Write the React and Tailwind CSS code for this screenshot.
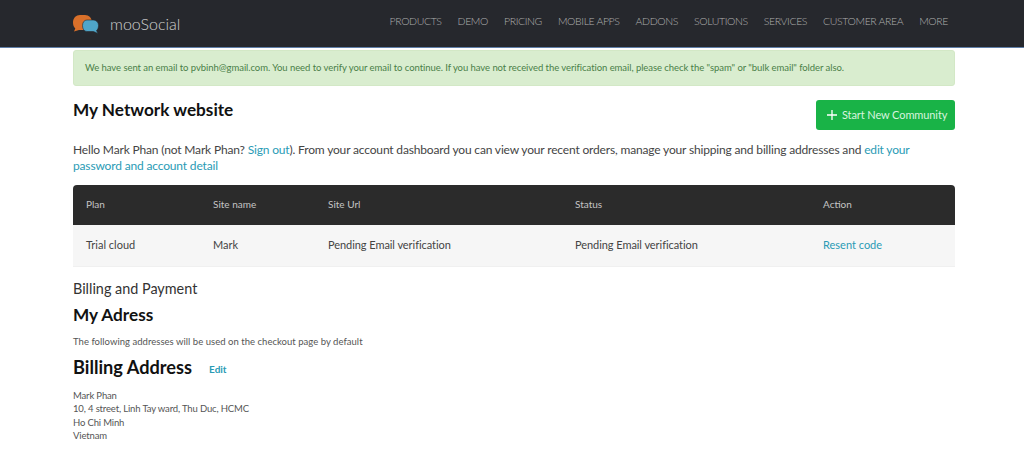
const navLinks = ['PRODUCTS', 'DEMO', 'PRICING', 'MOBILE APPS', 'ADDONS', 'SOLUTIONS', 'SERVICES', 'CUSTOMER AREA', 'MORE']

function Logo() {
  return (
    <svg width="26" height="19" viewBox="0 0 26 19" className="block mt-[1px]">
      <path d="M7 0h5c4 0 7 3 7 7.500S16 15 12 15H6L1 16.500 2.300 13.500C.8 12 0 10 0 7.500 0 3 3 0 7 0z" fill="#d9702a" />
      <path d="M14 5h6c3.300 0 5.500 2.300 5.500 5.500 0 2.300-.7 3.900-2 5l1.500 3-4.500-2h-6.500c-2.800 0-4.500-2.500-4.500-5.800S11.200 5 14 5z" fill="#4fa6c9" stroke="#26282d" strokeWidth="0.6" />
    </svg>
  )
}

function Header() {
  return (
    <nav className="h-[48px] bg-[#26282d] border-b border-[#5f7fa8]">
      <div className="flex items-center justify-between h-[47px] pl-[73px] pr-[76px]">
        <div className="flex items-center gap-[11px]">
          <Logo />
          <span className="text-[16px] font-light text-[#d0d0d0]">mooSocial</span>
        </div>
        <div className="flex items-center gap-[16px] pb-[3px]">
          {navLinks.map((link) => (
            <a key={link} className="text-[10.500px] font-light tracking-[-0.38px] text-[#b0b0b0]">
              {link}
            </a>
          ))}
        </div>
      </div>
    </nav>
  )
}

function PlanTable() {
  return (
    <div className="mt-[11px] text-[11px]">
      <div className="grid grid-cols-[127px_115px_247px_248px_1fr] items-center h-[40px] pb-[2px] pl-[13px] rounded-t-[4px] bg-[#2b2b2b] text-[#c4c4c4]">
        <span className="text-[10px]">Plan</span>
        <span className="text-[10px]">Site name</span>
        <span className="text-[10px]">Site Url</span>
        <span className="text-[10px]">Status</span>
        <span className="text-[10px]">Action</span>
      </div>
      <div className="grid grid-cols-[127px_115px_247px_248px_1fr] items-center h-[42px] pl-[13px] bg-[#f6f6f6] text-[#444] border-b border-[#f0f0f0]">
        <span>Trial cloud</span>
        <span>Mark</span>
        <span className="tracking-[-0.06px]">Pending Email verification</span>
        <span className="tracking-[-0.06px]">Pending Email verification</span>
        <a className="text-[#2a9bb5]">Resent code</a>
      </div>
    </div>
  )
}

export default function App() {
  return (
    <div className="min-h-[457px] bg-white font-['Lato',sans-serif] overflow-hidden">
      <Header />
      <main className="w-[882px] ml-[73px]">
        <div className="mt-[2px] h-[36px] flex items-center px-[11px] rounded-[3px] bg-[#d9edcf] border border-[#d3e8c6] text-[9.500px] tracking-[-0.06px] text-[#4a7f48]">
          We have sent an email to pvbinh@gmail.com. You need to verify your email to continue. If you have not received the verification email, please check the "spam" or "bulk email" folder also.
        </div>

        <div className="flex items-start justify-between mt-[14px]">
          <h1 className="text-[17.200px] leading-[20px] font-bold text-[#111]">My Network website</h1>
          <button className="flex items-center gap-[5px] w-[139px] h-[30px] pl-[11px] rounded-[3px] bg-[#19b347] text-[11px] tracking-[-0.1px] text-[#d8f3df]">
            <svg width="10" height="10" viewBox="0 0 10 10">
              <path d="M5 0v10M0 5h10" stroke="#fff" strokeWidth="1.300" />
            </svg>
            Start New Community
          </button>
        </div>

        <p className="mt-[12px] text-[12px] leading-[16px] tracking-[-0.165px] text-[#444]">
          Hello Mark Phan (not Mark Phan? <a className="text-[#2a9bb5]">Sign out</a>). From your account dashboard you can view your recent orders, manage your shipping and billing addresses and <a className="text-[#2a9bb5]">edit your password and account detail</a>
        </p>

        <PlanTable />

        <p className="mt-[13px] text-[14.400px] leading-[18px] text-[#333]">Billing and Payment</p>
        <h2 className="mt-[7px] text-[17.200px] leading-[20px] font-bold text-[#111]">My Adress</h2>
        <p className="mt-[11px] text-[9.500px] leading-[12px] tracking-[0.03px] text-[#555]">The following addresses will be used on the checkout page by default</p>
        <div className="flex items-center mt-[9px]">
          <h2 className="text-[18.200px] leading-[20px] font-bold text-[#111]">Billing Address</h2>
          <a className="ml-[17px] mt-[5px] text-[10px] font-bold text-[#2a9bb5]">Edit</a>
        </div>
        <div className="mt-[12px] text-[9.500px] leading-[13.400px] tracking-[-0.15px] text-[#555]">
          <div>Mark Phan</div>
          <div>10, 4 street, Linh Tay ward, Thu Duc, HCMC</div>
          <div>Ho Chi Minh</div>
          <div>Vietnam</div>
        </div>
      </main>
    </div>
  )
}
